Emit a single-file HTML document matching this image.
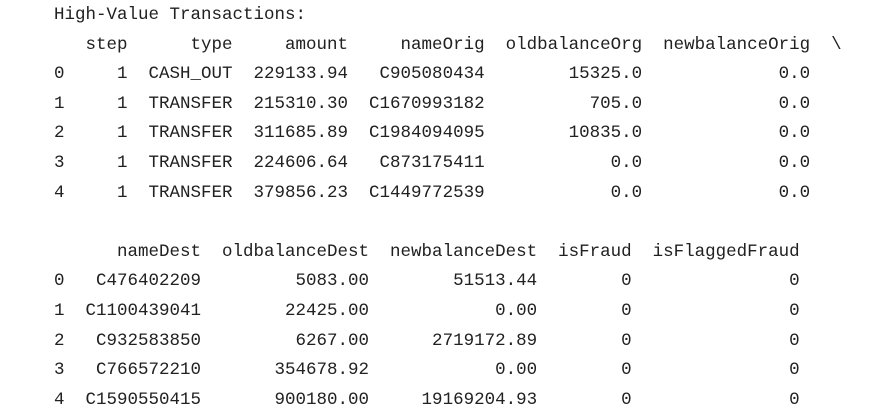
<!DOCTYPE html>
<html><head><style>
html,body{margin:0;padding:0;background:#fff;width:888px;height:418px;overflow:hidden}
pre{margin:0;position:absolute;left:54px;top:1px;font-family:"Liberation Mono",monospace;font-size:17.5px;line-height:29.6px;color:#212121}
</style></head><body>
<pre>High-Value Transactions:
   step      type     amount     nameOrig  oldbalanceOrg  newbalanceOrig  \
0     1  CASH_OUT  229133.94   C905080434        15325.0             0.0
1     1  TRANSFER  215310.30  C1670993182          705.0             0.0
2     1  TRANSFER  311685.89  C1984094095        10835.0             0.0
3     1  TRANSFER  224606.64   C873175411            0.0             0.0
4     1  TRANSFER  379856.23  C1449772539            0.0             0.0

      nameDest  oldbalanceDest  newbalanceDest  isFraud  isFlaggedFraud
0   C476402209         5083.00        51513.44        0               0
1  C1100439041        22425.00            0.00        0               0
2   C932583850         6267.00      2719172.89        0               0
3   C766572210       354678.92            0.00        0               0
4  C1590550415       900180.00     19169204.93        0               0</pre>
</body></html>
